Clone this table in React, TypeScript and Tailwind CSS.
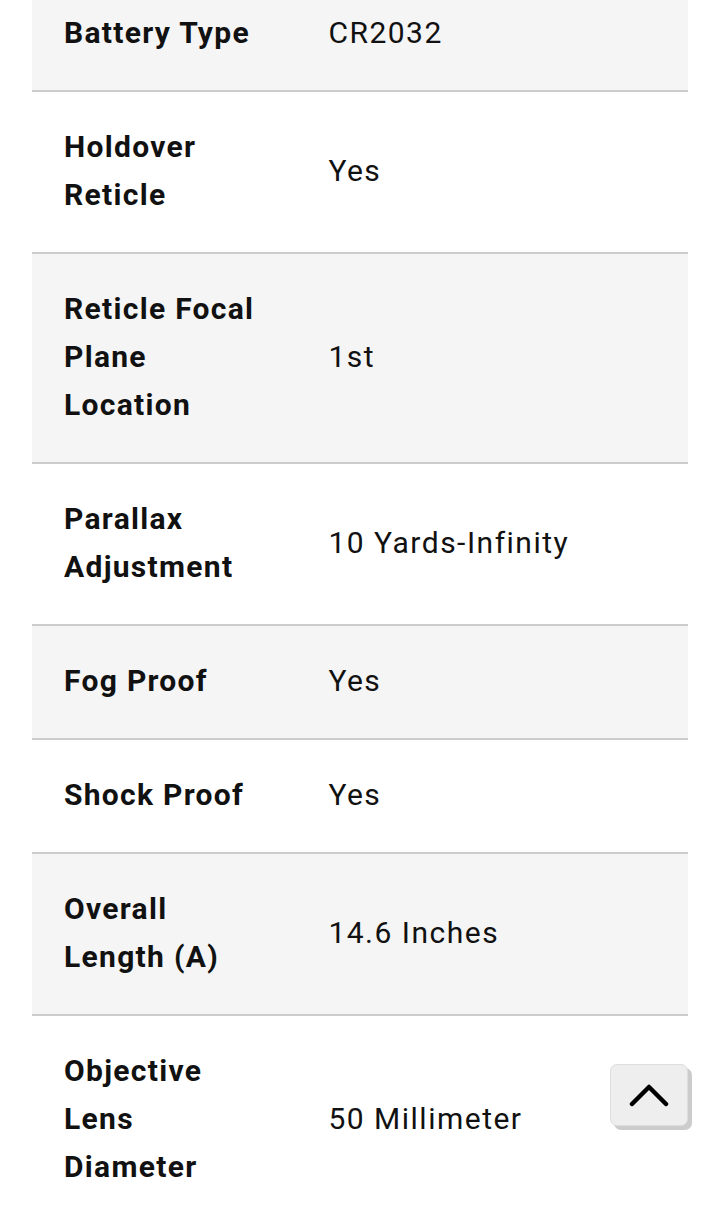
import React from "react";

const rows: [string, string][] = [
  ["Battery Type", "CR2032"],
  ["Holdover Reticle", "Yes"],
  ["Reticle Focal Plane Location", "1st"],
  ["Parallax Adjustment", "10 Yards-Infinity"],
  ["Fog Proof", "Yes"],
  ["Shock Proof", "Yes"],
  ["Overall Length (A)", "14.6 Inches"],
  ["Objective Lens Diameter", "50 Millimeter"],
];

export default function App() {
  return (
    <div
      className="relative w-[720px] h-[1224px] overflow-hidden bg-white text-[#111111]"
      style={{ fontFamily: "Roboto, 'Liberation Sans', sans-serif" }}
    >
      <div className="mx-8 mt-[-22px] flex flex-col">
        {rows.map(([label, value], i) => (
          <div
            key={label}
            className={`flex items-center border-b-2 border-[#cccccc] ${
              i % 2 === 0 ? "bg-[#f5f5f5]" : "bg-white"
            }`}
          >
            <div className="w-[40%] shrink-0 pl-8 pr-7 pt-[31px] pb-[33px] text-[30px] leading-[48px] font-bold tracking-[1.3px]">
              {label}
            </div>
            <div className="flex-1 pl-[34px] pr-8 pt-[31px] pb-[33px] text-[30px] leading-[48px] tracking-[1.5px]">
              {value}
            </div>
          </div>
        ))}
      </div>
      <button className="absolute left-[610px] top-[1064px] w-[78px] h-[62px] rounded-[7px] bg-[#eeeeee] border border-[#dddddd] shadow-[4px_4px_0_#cccccc] flex items-center justify-center">
        <svg width="40" height="28" viewBox="0 0 40 28" fill="none">
          <path
            d="M3 23 L20 6 L37 23"
            stroke="#000"
            strokeWidth="4.5"
            strokeLinecap="round"
            strokeLinejoin="round"
          />
        </svg>
      </button>
    </div>
  );
}
